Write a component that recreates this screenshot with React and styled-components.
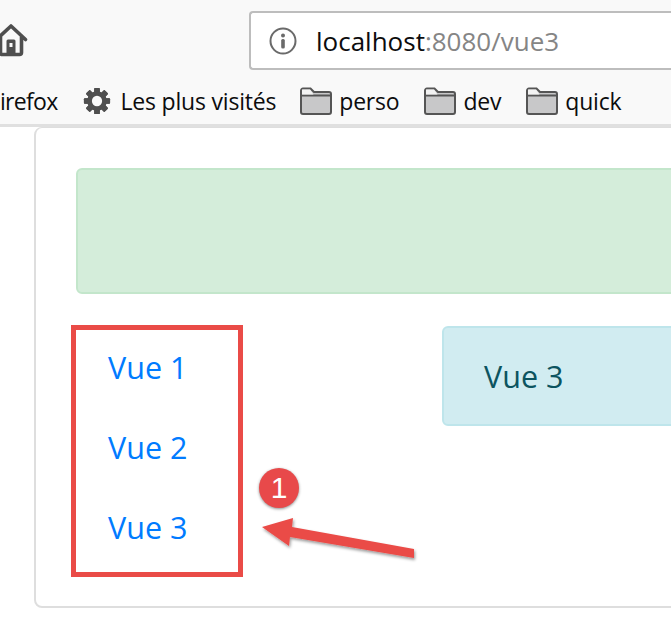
import styled, { createGlobalStyle } from 'styled-components'

const GlobalStyle = createGlobalStyle`
  html, body {
    margin: 0;
    padding: 0;
    background: #fff;
    overflow: hidden;
  }
  body {
    font-family: "Open Sans", "Noto Sans", "Liberation Sans", sans-serif;
  }
`

const Page = styled.div`
  position: relative;
  width: 671px;
  height: 642px;
  overflow: hidden;
`

const Toolbar = styled.header`
  height: 124px;
  background: #f9f9f9;
  border-bottom: 3px solid #e0e0e0;
  display: flex;
  flex-direction: column;
`

const NavRow = styled.div`
  height: 79px;
  display: flex;
  align-items: flex-start;
  padding-top: 11px;
  box-sizing: border-box;
`

const HomeButton = styled.div`
  width: 250px;
  height: 58px;
  flex: none;
  margin-left: -6px;
  display: flex;
  align-items: center;
`

const UrlBar = styled.div`
  flex: none;
  width: 460px;
  height: 59px;
  box-sizing: border-box;
  margin-left: 5px;
  background: #fff;
  border: 2px solid #bdbdbd;
  border-right: 0;
  border-radius: 4px 0 0 4px;
  display: flex;
  align-items: center;
  padding-left: 18px;
  gap: 19px;
  font-size: 26px;
  color: #0c0c0d;
`

const UrlRest = styled.span`
  color: #858585;
`

const Bookmarks = styled.nav`
  display: flex;
  align-items: center;
  height: 44px;
  font-size: 23px;
  color: #0c0c0d;
`

const Bookmark = styled.div`
  display: flex;
  align-items: center;
  gap: ${(p) => p.$gap || 7}px;
  margin-right: ${(p) => p.$after || 25}px;
  white-space: nowrap;
  letter-spacing: ${(p) => p.$tight || -0.2}px;
`

const Card = styled.main`
  box-sizing: border-box;
  width: 700px;
  height: 481px;
  margin-left: 34px;
  border: 2px solid #dedede;
  border-top-width: 1px;
  border-radius: 8px;
  padding: 40px 0 0 40px;
`

const Alert = styled.div`
  box-sizing: border-box;
  border-radius: 6px;
  border: 2px solid ${(p) => p.$border};
  background: ${(p) => p.$bg};
  color: ${(p) => p.$color};
`

const SuccessAlert = styled(Alert)`
  height: 126px;
`

const Columns = styled.div`
  display: flex;
  align-items: flex-start;
  margin-top: 31px;
  margin-left: -5px;
`

const LinkList = styled.ul`
  box-sizing: border-box;
  width: 172px;
  height: 252px;
  flex: none;
  margin: 0;
  padding: 0 0 0 32px;
  list-style: none;
  border: 5px solid #ea4b47;
`

const LinkItem = styled.li`
  box-sizing: border-box;
  height: 80px;
  padding-bottom: 6px;
  display: flex;
  align-items: center;
  font-size: 30.5px;
  color: #007bff;
`

const InfoAlert = styled(Alert)`
  width: 300px;
  height: 100px;
  margin: 1px 0 0 199px;
  display: flex;
  align-items: center;
  padding-left: 40px;
  font-size: 30.5px;
`

const Callout = styled.svg`
  position: absolute;
  left: 250px;
  top: 460px;
  overflow: visible;
`

const Badge = styled.div`
  position: absolute;
  left: 259px;
  top: 468px;
  width: 40px;
  height: 40px;
  border-radius: 50%;
  background: #e8494a;
  box-shadow: 0 1px 3px rgba(0, 0, 0, 0.45);
  color: #fff;
  font-family: "Liberation Sans", Arial, sans-serif;
  font-size: 30px;
  display: flex;
  align-items: center;
  justify-content: center;
`

const Folder = () => (
  <svg width="32" height="28" viewBox="0 0 32 28">
    <path
      d="M3 1.5h7.5l3.5 3.5h15a2 2 0 0 1 2 2V25a2 2 0 0 1-2 2H3a2 2 0 0 1-2-2V3.5a2 2 0 0 1 2-2z"
      fill="#c8c8c9"
      stroke="#555"
      strokeWidth="2"
    />
    <path d="M1 8.5h30" stroke="#555" strokeWidth="2" />
    <path d="M2 2.5h8l3.5 5H2z" fill="#f3f3f3" />
  </svg>
)

const Gear = () => (
  <svg width="28" height="28" viewBox="0 0 30 30">
    <g fill="#4f4f4f">
      {[0, 45, 90, 135, 180, 225, 270, 315].map((a) => (
        <rect key={a} x="12" y="1" width="6" height="28" rx="1" transform={`rotate(${a} 15 15)`} />
      ))}
      <circle cx="15" cy="15" r="10.5" />
    </g>
    <circle cx="15" cy="15" r="5.5" fill="#f9f9f9" />
  </svg>
)

const Home = () => (
  <svg width="34" height="34" viewBox="0 0 34 34">
    <path
      d="M2.5 16.5 17 3l14.5 13.5M6.5 14v15.5a2 2 0 0 0 2 2h17a2 2 0 0 0 2-2V14"
      fill="none"
      stroke="#4f4f4f"
      strokeWidth="3.6"
      strokeLinecap="round"
      strokeLinejoin="round"
    />
    <path
      fillRule="evenodd"
      d="M12.5 31V18a1.5 1.5 0 0 1 1.5-1.5h6a1.5 1.5 0 0 1 1.500 1.500v13zM15.500 20v4h3v-4z"
      fill="#4f4f4f"
    />
  </svg>
)

const InfoIcon = () => (
  <svg width="28" height="28" viewBox="0 0 28 28">
    <circle cx="14" cy="14" r="12.5" fill="none" stroke="#6a6a6a" strokeWidth="2" />
    <circle cx="14" cy="8.5" r="2" fill="#6a6a6a" />
    <rect x="12.2" y="12" width="3.6" height="9.5" rx="1.5" fill="#6a6a6a" />
  </svg>
)

const App = () => (
  <Page>
    <GlobalStyle />
    <Toolbar>
      <NavRow>
        <HomeButton>
          <Home />
        </HomeButton>
        <UrlBar>
          <InfoIcon />
          <span>
            localhost
            <UrlRest>:8080/vue3</UrlRest>
          </span>
        </UrlBar>
      </NavRow>
      <Bookmarks>
        <Bookmark $tight={-0.7} $after={25}>irefox</Bookmark>
        <Bookmark $gap={10} $after={24}>
          <Gear />
          Les plus visités
        </Bookmark>
        <Bookmark>
          <Folder />
          perso
        </Bookmark>
        <Bookmark>
          <Folder />
          dev
        </Bookmark>
        <Bookmark>
          <Folder />
          quick
        </Bookmark>
      </Bookmarks>
    </Toolbar>
    <Card>
      <SuccessAlert $bg="#d4edda" $border="#c3e6cb" />
      <Columns>
        <LinkList>
          <LinkItem>Vue 1</LinkItem>
          <LinkItem>Vue 2</LinkItem>
          <LinkItem>Vue 3</LinkItem>
        </LinkList>
        <InfoAlert $bg="#d1ecf1" $border="#bee5eb" $color="#0c5460">
          Vue 3
        </InfoAlert>
      </Columns>
    </Card>
    <Badge>1</Badge>
    <Callout width="170" height="110" viewBox="0 0 170 110">
      <defs>
        <filter id="arrowShadow" x="-10%" y="-20%" width="120%" height="150%">
          <feDropShadow dx="1" dy="2" stdDeviation="1.5" floodColor="#000" floodOpacity="0.4" />
        </filter>
      </defs>
      <path
        d="M12 67 L43 58 L42 67 L164 89 L164 98 L40 77 L39 86 Z"
        fill="#ea4b47"
        filter="url(#arrowShadow)"
      />
    </Callout>
  </Page>
)

export default App
